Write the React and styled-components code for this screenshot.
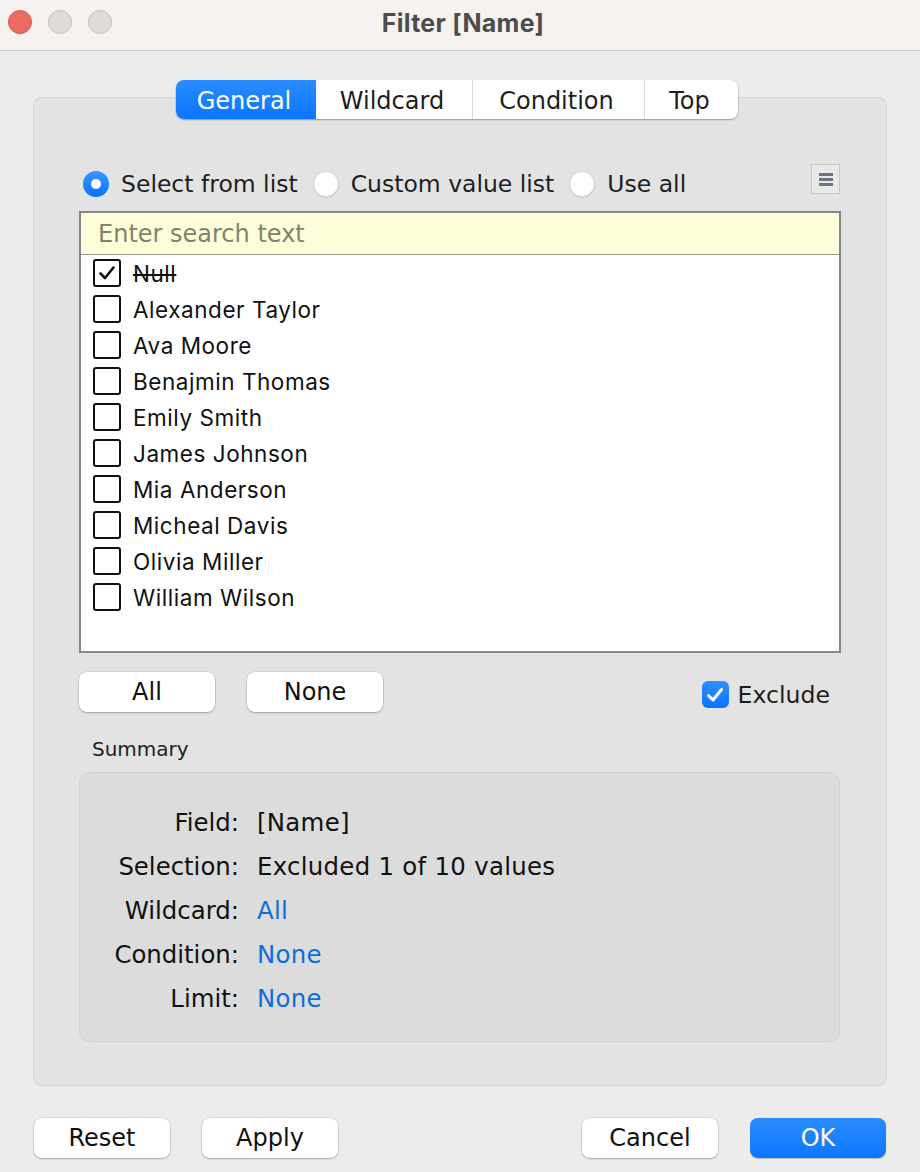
import React from "react";
import styled, { createGlobalStyle } from "styled-components";

const GlobalStyle = createGlobalStyle`
  html, body { margin: 0; padding: 0; }
  body {
    background: #ececec;
    font-family: "DejaVu Sans", "Liberation Sans", sans-serif;
    color: #1a1a1a;
  }
  * { box-sizing: border-box; }
`;

const Window = styled.div`
  width: 920px;
  height: 1172px;
  display: flex;
  flex-direction: column;
  background: #ececec;
  overflow: hidden;
`;

const TitleBar = styled.div`
  height: 51px;
  flex-shrink: 0;
  display: grid;
  grid-template-columns: 1fr auto 1fr;
  align-items: center;
  padding: 0 8px 7px;
  background: #f6f2ef;
  border-bottom: 1px solid #cbc8c6;
`;

const Lights = styled.div`
  display: flex;
  gap: 16px;
`;

const Light = styled.span`
  width: 24px;
  height: 24px;
  border-radius: 50%;
  background: ${(p) => (p.$red ? "#ec6a5e" : "#dedbd8")};
  border: 1px solid ${(p) => (p.$red ? "#d4574c" : "#c4c1be")};
`;

const Title = styled.div`
  font-family: Inter, "Liberation Sans", sans-serif;
  font-weight: 700;
  font-size: 25px;
  color: #4c4c4c;
  letter-spacing: 0.3px;
  margin-top: 3px;
  margin-left: 6px;
`;

const Content = styled.div`
  flex: 1;
  display: flex;
  flex-direction: column;
  padding: 0 33px;
`;

const TabsRow = styled.div`
  display: flex;
  justify-content: center;
  margin-top: 29px;
  margin-bottom: -22px;
  padding-right: 6px;
  position: relative;
  z-index: 1;
`;

const Tabs = styled.div`
  display: flex;
  height: 39px;
  background: #ffffff;
  border-radius: 8px;
  box-shadow: 0 0.5px 0 0.5px rgba(0, 0, 0, 0.12), 0 1px 2px rgba(0, 0, 0, 0.22);
  overflow: hidden;
`;

const Tab = styled.div`
  width: ${(p) => p.$w}px;
  display: flex;
  align-items: center;
  justify-content: center;
  padding-top: 2px;
  padding-right: 4px;
  font-size: 24px;
  color: ${(p) => (p.$active ? "#ffffff" : "#1e1e1e")};
  background: ${(p) =>
    p.$active ? "linear-gradient(#2b8cff, #0a76ff)" : "transparent"};
  border-left: ${(p) => (p.$divider ? "1.5px solid #dadada" : "none")};
`;

const GroupBox = styled.div`
  height: 989px;
  display: flex;
  flex-direction: column;
  padding: 66px 45px 0;
  background: #e3e3e3;
  border: 1px solid #d6d6d6;
  border-radius: 8px;
`;

const RadioRow = styled.div`
  display: flex;
  align-items: center;
  height: 30px;
  padding-left: 4px;
  gap: 15px;
`;

const RadioOption = styled.label`
  display: flex;
  align-items: center;
  gap: 12px;
  margin-top: 9px;
  font-size: 23.5px;
  color: #1e1e1e;
`;

const RadioDot = styled.span`
  width: 26px;
  height: 26px;
  border-radius: 50%;
  display: flex;
  align-items: center;
  justify-content: center;
  background: ${(p) => (p.$on ? "linear-gradient(#3a94ff, #0a74ff)" : "#ffffff")};
  border: ${(p) => (p.$on ? "none" : "1px solid #d2d2d2")};
  box-shadow: ${(p) => (p.$on ? "none" : "0 1px 1px rgba(0,0,0,0.08)")};
  &::after {
    content: "";
    display: ${(p) => (p.$on ? "block" : "none")};
    width: 10px;
    height: 10px;
    border-radius: 50%;
    background: #ffffff;
  }
`;

const Spacer = styled.div`
  flex: 1;
`;

const MenuButton = styled.div`
  width: 29px;
  height: 30px;
  display: flex;
  flex-direction: column;
  align-items: center;
  justify-content: center;
  gap: 2px;
  background: #e9e9e9;
  border: 1.5px solid #c6c6c6;
  margin-right: 1px;
`;

const MenuBar = styled.span`
  width: 14px;
  height: 3px;
  background: #6b7587;
`;

const ListBox = styled.div`
  margin-top: 17px;
  height: 442px;
  display: flex;
  flex-direction: column;
  border: 2px solid #84878d;
  background: #ffffff;
`;

const SearchField = styled.div`
  height: 42px;
  flex-shrink: 0;
  display: flex;
  align-items: center;
  padding-left: 17px;
  background: #fffedb;
  border-bottom: 1.5px solid #9a9a8a;
  font-size: 24px;
  color: #82826c;
`;

const Items = styled.div`
  display: flex;
  flex-direction: column;
`;

const Item = styled.div`
  height: 36px;
  display: flex;
  align-items: center;
  gap: 12px;
  padding-left: 12px;
  font-family: Inter, "Liberation Sans", sans-serif;
  font-size: 22.5px;
  letter-spacing: 0.55px;
  color: #111111;
`;

const ItemText = styled.span`
  text-decoration: ${(p) => (p.$strike ? "line-through" : "none")};
  text-decoration-thickness: 1.5px;
`;

const Box = styled.span`
  width: 28px;
  height: 28px;
  border: 2px solid #111111;
  border-radius: 3px;
  display: flex;
  align-items: center;
  justify-content: center;
`;

const ButtonRow = styled.div`
  margin-top: 19px;
  display: flex;
  align-items: center;
  gap: 32px;
  padding-right: 11px;
`;

const Button = styled.div`
  width: 136px;
  height: 40px;
  margin-left: ${(p) => (p.$push ? "auto" : "0")};
  display: flex;
  align-items: center;
  justify-content: center;
  border-radius: 8px;
  font-size: 24px;
  color: ${(p) => (p.$primary ? "#ffffff" : "#111111")};
  background: ${(p) =>
    p.$primary ? "linear-gradient(#2c8dff, #0a76ff)" : "#ffffff"};
  box-shadow: ${(p) =>
    p.$primary
      ? "0 0.5px 1px rgba(0,0,0,0.2)"
      : "0 0 0 0.5px rgba(0,0,0,0.12), 0 1px 2px rgba(0,0,0,0.25)"};
`;

const ExcludeCheck = styled.label`
  margin-left: auto;
  display: flex;
  align-items: center;
  gap: 9px;
  font-size: 23.6px;
  color: #1e1e1e;
  padding-top: 5px;
`;

const BlueBox = styled.span`
  width: 27px;
  height: 27px;
  border-radius: 6px;
  background: linear-gradient(#2f8fff, #0a74ff);
  display: flex;
  align-items: center;
  justify-content: center;
`;

const SummaryLabel = styled.div`
  margin-top: 25px;
  padding-left: 13px;
  font-size: 20px;
  color: #1e1e1e;
  line-height: 24px;
`;

const SummaryBox = styled.div`
  margin-top: 11px;
  height: 270px;
  margin-right: 1px;
  padding: 27px 0 0;
  display: grid;
  grid-template-columns: 159px 1fr;
  grid-auto-rows: 44px;
  column-gap: 18px;
  align-items: center;
  background: #dcdcdc;
  border: 1px solid #d2d2d2;
  border-radius: 10px;
  font-size: 24.4px;
`;

const SumKey = styled.div`
  text-align: right;
  color: #111111;
`;

const SumVal = styled.div`
  color: ${(p) => (p.$link ? "#0a6fdb" : "#111111")};
  letter-spacing: 0.3px;
`;

const Footer = styled.div`
  margin-top: 32px;
  display: flex;
  gap: 32px;
  padding: 0 1px;
`;

const Check = ({ color, width }) => (
  <svg width="18" height="16" viewBox="0 0 18 16">
    <path
      d="M2.5 8.5 L7 13 L15.5 2.5"
      fill="none"
      stroke={color}
      strokeWidth={width}
      strokeLinecap="round"
      strokeLinejoin="round"
    />
  </svg>
);

const names = [
  "Alexander Taylor",
  "Ava Moore",
  "Benajmin Thomas",
  "Emily Smith",
  "James Johnson",
  "Mia Anderson",
  "Micheal Davis",
  "Olivia Miller",
  "William Wilson",
];

const summary = [
  ["Field:", "[Name]", false],
  ["Selection:", "Excluded 1 of 10 values", false],
  ["Wildcard:", "All", true],
  ["Condition:", "None", true],
  ["Limit:", "None", true],
];

export default function App() {
  return (
    <Window>
      <GlobalStyle />
      <TitleBar>
        <Lights>
          <Light $red />
          <Light />
          <Light />
        </Lights>
        <Title>Filter [Name]</Title>
        <div />
      </TitleBar>
      <Content>
        <TabsRow>
          <Tabs>
            <Tab $w={140} $active>General</Tab>
            <Tab $w={156}>Wildcard</Tab>
            <Tab $w={172} $divider>Condition</Tab>
            <Tab $w={94} $divider>Top</Tab>
          </Tabs>
        </TabsRow>
        <GroupBox>
          <RadioRow>
            <RadioOption>
              <RadioDot $on />
              Select from list
            </RadioOption>
            <RadioOption>
              <RadioDot />
              Custom value list
            </RadioOption>
            <RadioOption>
              <RadioDot />
              Use all
            </RadioOption>
            <Spacer />
            <MenuButton>
              <MenuBar />
              <MenuBar />
              <MenuBar />
            </MenuButton>
          </RadioRow>
          <ListBox>
            <SearchField>Enter search text</SearchField>
            <Items>
              <Item>
                <Box>
                  <Check color="#111" width={2.6} />
                </Box>
                <ItemText $strike>Null</ItemText>
              </Item>
              {names.map((n) => (
                <Item key={n}>
                  <Box />
                  <ItemText>{n}</ItemText>
                </Item>
              ))}
            </Items>
          </ListBox>
          <ButtonRow>
            <Button>All</Button>
            <Button>None</Button>
            <ExcludeCheck>
              <BlueBox>
                <Check color="#fff" width={3} />
              </BlueBox>
              Exclude
            </ExcludeCheck>
          </ButtonRow>
          <SummaryLabel>Summary</SummaryLabel>
          <SummaryBox>
            {summary.map(([k, v, link]) => (
              <React.Fragment key={k}>
                <SumKey>{k}</SumKey>
                <SumVal $link={link}>{v}</SumVal>
              </React.Fragment>
            ))}
          </SummaryBox>
        </GroupBox>
        <Footer>
          <Button>Reset</Button>
          <Button>Apply</Button>
          <Button $push>Cancel</Button>
          <Button $primary>OK</Button>
        </Footer>
      </Content>
    </Window>
  );
}
